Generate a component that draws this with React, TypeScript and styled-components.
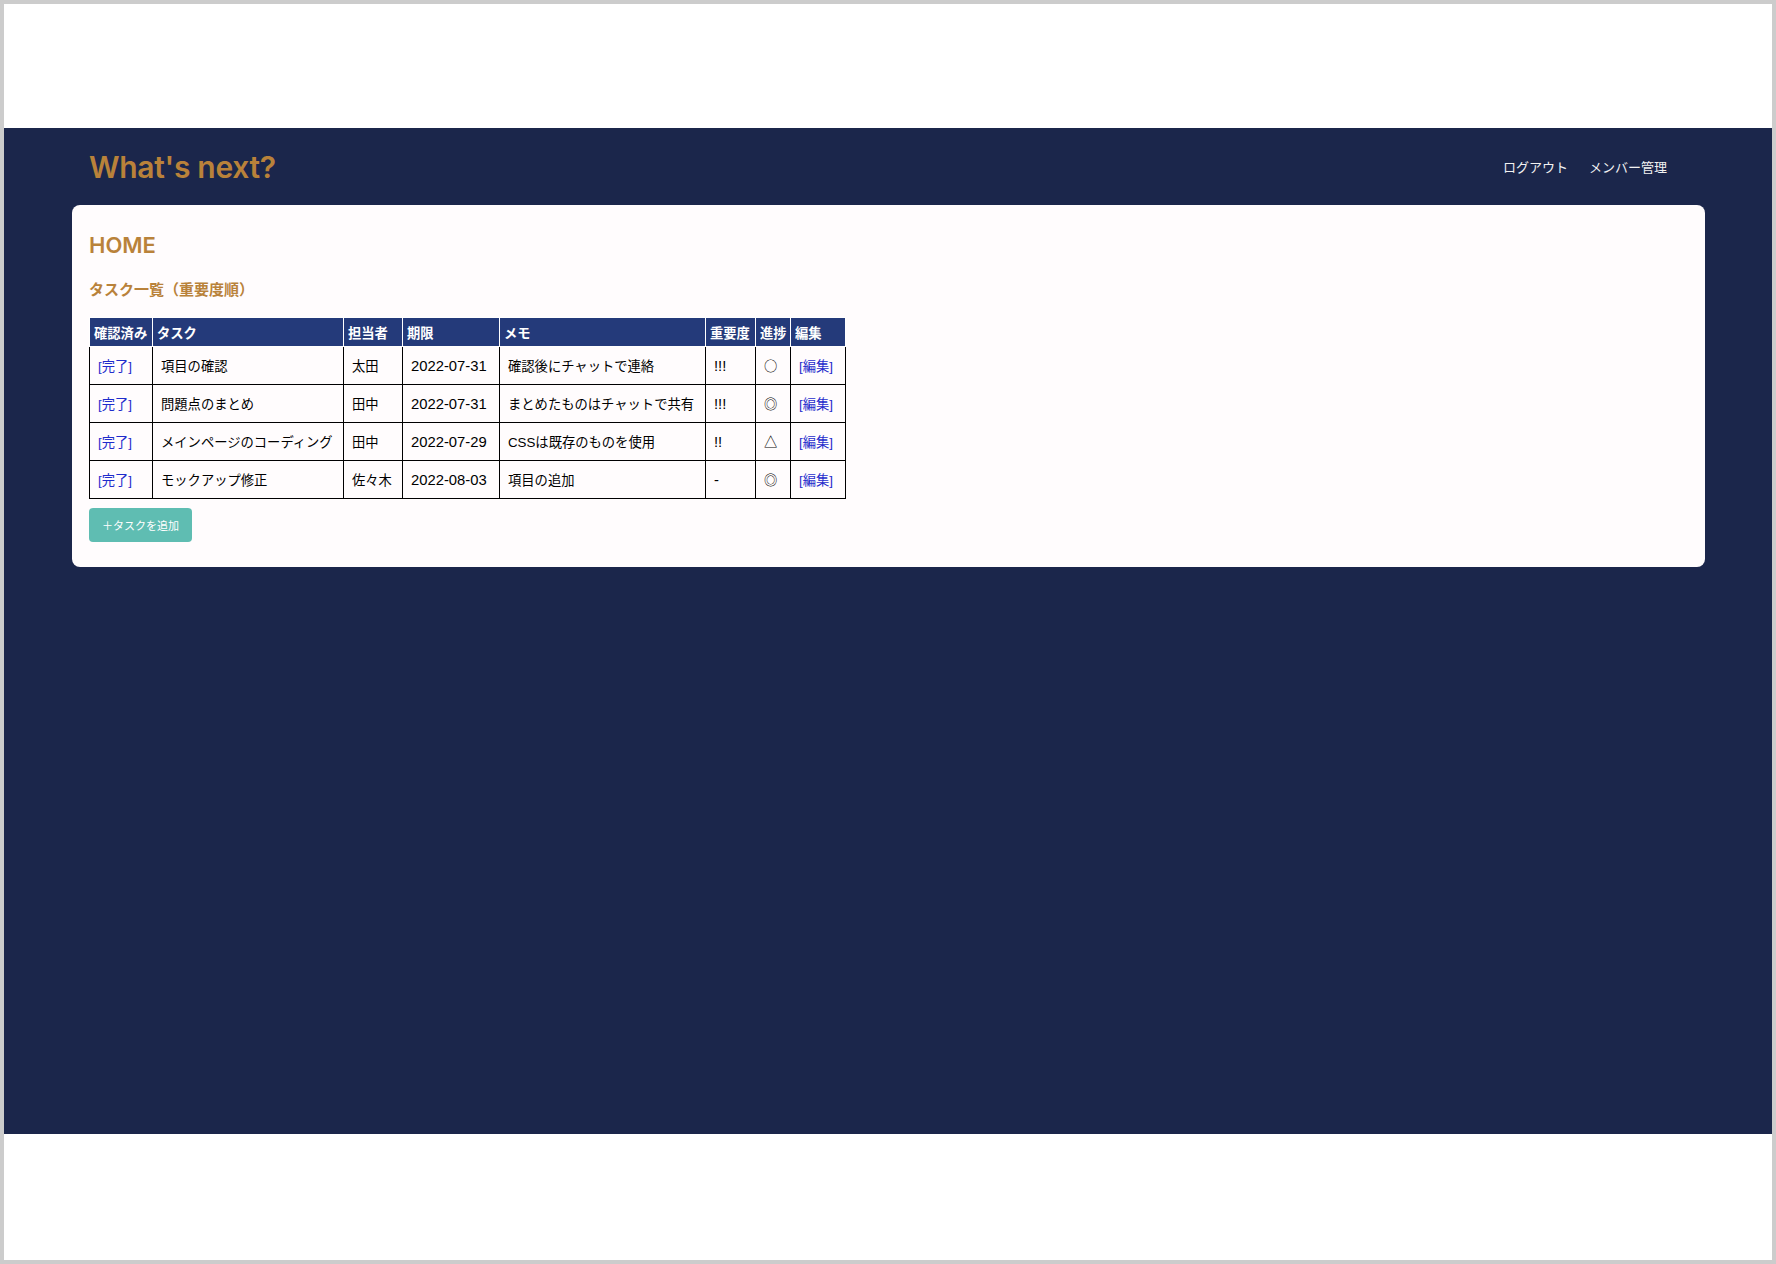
import styled, { createGlobalStyle } from "styled-components";

const $navy = "#1b264b";
const $gold = "#b9823a";
const $head = "#243a7a";
const $teal = "#5fbdb2";
const $link = "#1f2ccc";

const GlobalStyle = createGlobalStyle`
  html, body {
    margin: 0;
    padding: 0;
    background: #ffffff;
  }
  body {
    font-family: "Liberation Sans", "Noto Sans CJK JP", sans-serif;
    color: #000;
  }
`;

const Frame = styled.div`
  box-sizing: border-box;
  width: 1776px;
  height: 1264px;
  border: 4px solid #cccccc;
  background: #ffffff;
  display: flex;
  flex-direction: column;
`;

const Spacer = styled.div<{ $h: number }>`
  height: ${(p) => p.$h}px;
  flex-shrink: 0;
`;

const Stage = styled.div`
  height: 1006px;
  flex-shrink: 0;
  background: ${$navy};
  display: flex;
  flex-direction: column;
  padding: 0 67px 0 68px;
`;

const Header = styled.header`
  height: 77px;
  display: flex;
  align-items: center;
  justify-content: space-between;
  padding: 0 38px 0 17px;
`;

const Logo = styled.h1`
  margin: 0;
  font-family: Inter, "Liberation Sans", sans-serif;
  font-size: 30px;
  font-weight: 600;
  letter-spacing: -0.3px;
  color: ${$gold};
  line-height: 1;
`;

const Nav = styled.nav`
  display: flex;
  gap: 21px;
`;

const NavLink = styled.a`
  color: #f2f2f2;
  font-size: 13px;
  text-decoration: none;
`;

const Card = styled.section`
  background: #fffcfd;
  border-radius: 8px;
  padding: 26px 17px 25px;
  display: flex;
  flex-direction: column;
  align-items: flex-start;
`;

const PageTitle = styled.h2`
  margin: 0;
  font-family: Inter, "Liberation Sans", sans-serif;
  font-size: 22px;
  line-height: 28px;
  font-weight: 600;
  color: ${$gold};
`;

const SectionTitle = styled.h3`
  margin: 22px 0 18px;
  font-size: 15px;
  line-height: 18px;
  font-weight: 700;
  color: ${$gold};
`;

const Table = styled.table`
  border-collapse: collapse;
  table-layout: fixed;
  width: 756px;
  font-size: 13.3px;
`;

const Th = styled.th`
  background: ${$head};
  color: #fff;
  font-weight: 700;
  text-align: left;
  height: 28px;
  padding: 0 4px;
  border: 1px solid #ffffff;
  white-space: nowrap;
`;

const Td = styled.td<{ $latin?: boolean; $symbol?: boolean }>`
  height: 37px;
  padding: 0 8px;
  border: 1px solid #000;
  white-space: nowrap;
  vertical-align: middle;
  font-size: ${(p) => (p.$latin ? "14.8px" : "13.3px")};
  font-family: ${(p) =>
    p.$symbol
      ? '"Noto Sans CJK JP", sans-serif'
      : '"Liberation Sans", "Noto Sans CJK JP", sans-serif'};
`;

const Link = styled.a`
  color: ${$link};
  text-decoration: none;
`;

const AddButton = styled.button`
  margin-top: 9px;
  height: 34px;
  padding: 0 13px;
  border: none;
  border-radius: 4px;
  background: ${$teal};
  color: #fff;
  font-family: "Liberation Sans", "Noto Sans CJK JP", sans-serif;
  font-size: 11px;
`;

const columns = [
  { label: "確認済み", width: 63 },
  { label: "タスク", width: 191 },
  { label: "担当者", width: 59 },
  { label: "期限", width: 97 },
  { label: "メモ", width: 206 },
  { label: "重要度", width: 50 },
  { label: "進捗", width: 35 },
  { label: "編集", width: 55 },
];

const tasks = [
  { task: "項目の確認", owner: "太田", due: "2022-07-31", memo: "確認後にチャットで連絡", level: "!!!", progress: "○" },
  { task: "問題点のまとめ", owner: "田中", due: "2022-07-31", memo: "まとめたものはチャットで共有", level: "!!!", progress: "◎" },
  { task: "メインページのコーディング", owner: "田中", due: "2022-07-29", memo: "CSSは既存のものを使用", level: "!!", progress: "△" },
  { task: "モックアップ修正", owner: "佐々木", due: "2022-08-03", memo: "項目の追加", level: "-", progress: "◎" },
];

const App = () => {
  return (
    <>
      <GlobalStyle />
      <Frame>
        <Spacer $h={124} />
        <Stage>
          <Header>
            <Logo>What's next?</Logo>
            <Nav>
              <NavLink href="#">ログアウト</NavLink>
              <NavLink href="#">メンバー管理</NavLink>
            </Nav>
          </Header>
          <Card>
            <PageTitle>HOME</PageTitle>
            <SectionTitle>タスク一覧（重要度順）</SectionTitle>
            <Table>
              <colgroup>
                {columns.map((c) => (
                  <col key={c.label} style={{ width: c.width }} />
                ))}
              </colgroup>
              <thead>
                <tr>
                  {columns.map((c) => (
                    <Th key={c.label}>{c.label}</Th>
                  ))}
                </tr>
              </thead>
              <tbody>
                {tasks.map((t) => (
                  <tr key={t.task}>
                    <Td>
                      <Link href="#">[完了]</Link>
                    </Td>
                    <Td>{t.task}</Td>
                    <Td>{t.owner}</Td>
                    <Td $latin>{t.due}</Td>
                    <Td>{t.memo}</Td>
                    <Td $latin>{t.level}</Td>
                    <Td $symbol>{t.progress}</Td>
                    <Td>
                      <Link href="#">[編集]</Link>
                    </Td>
                  </tr>
                ))}
              </tbody>
            </Table>
            <AddButton>＋タスクを追加</AddButton>
          </Card>
        </Stage>
      </Frame>
    </>
  );
};

export default App;
